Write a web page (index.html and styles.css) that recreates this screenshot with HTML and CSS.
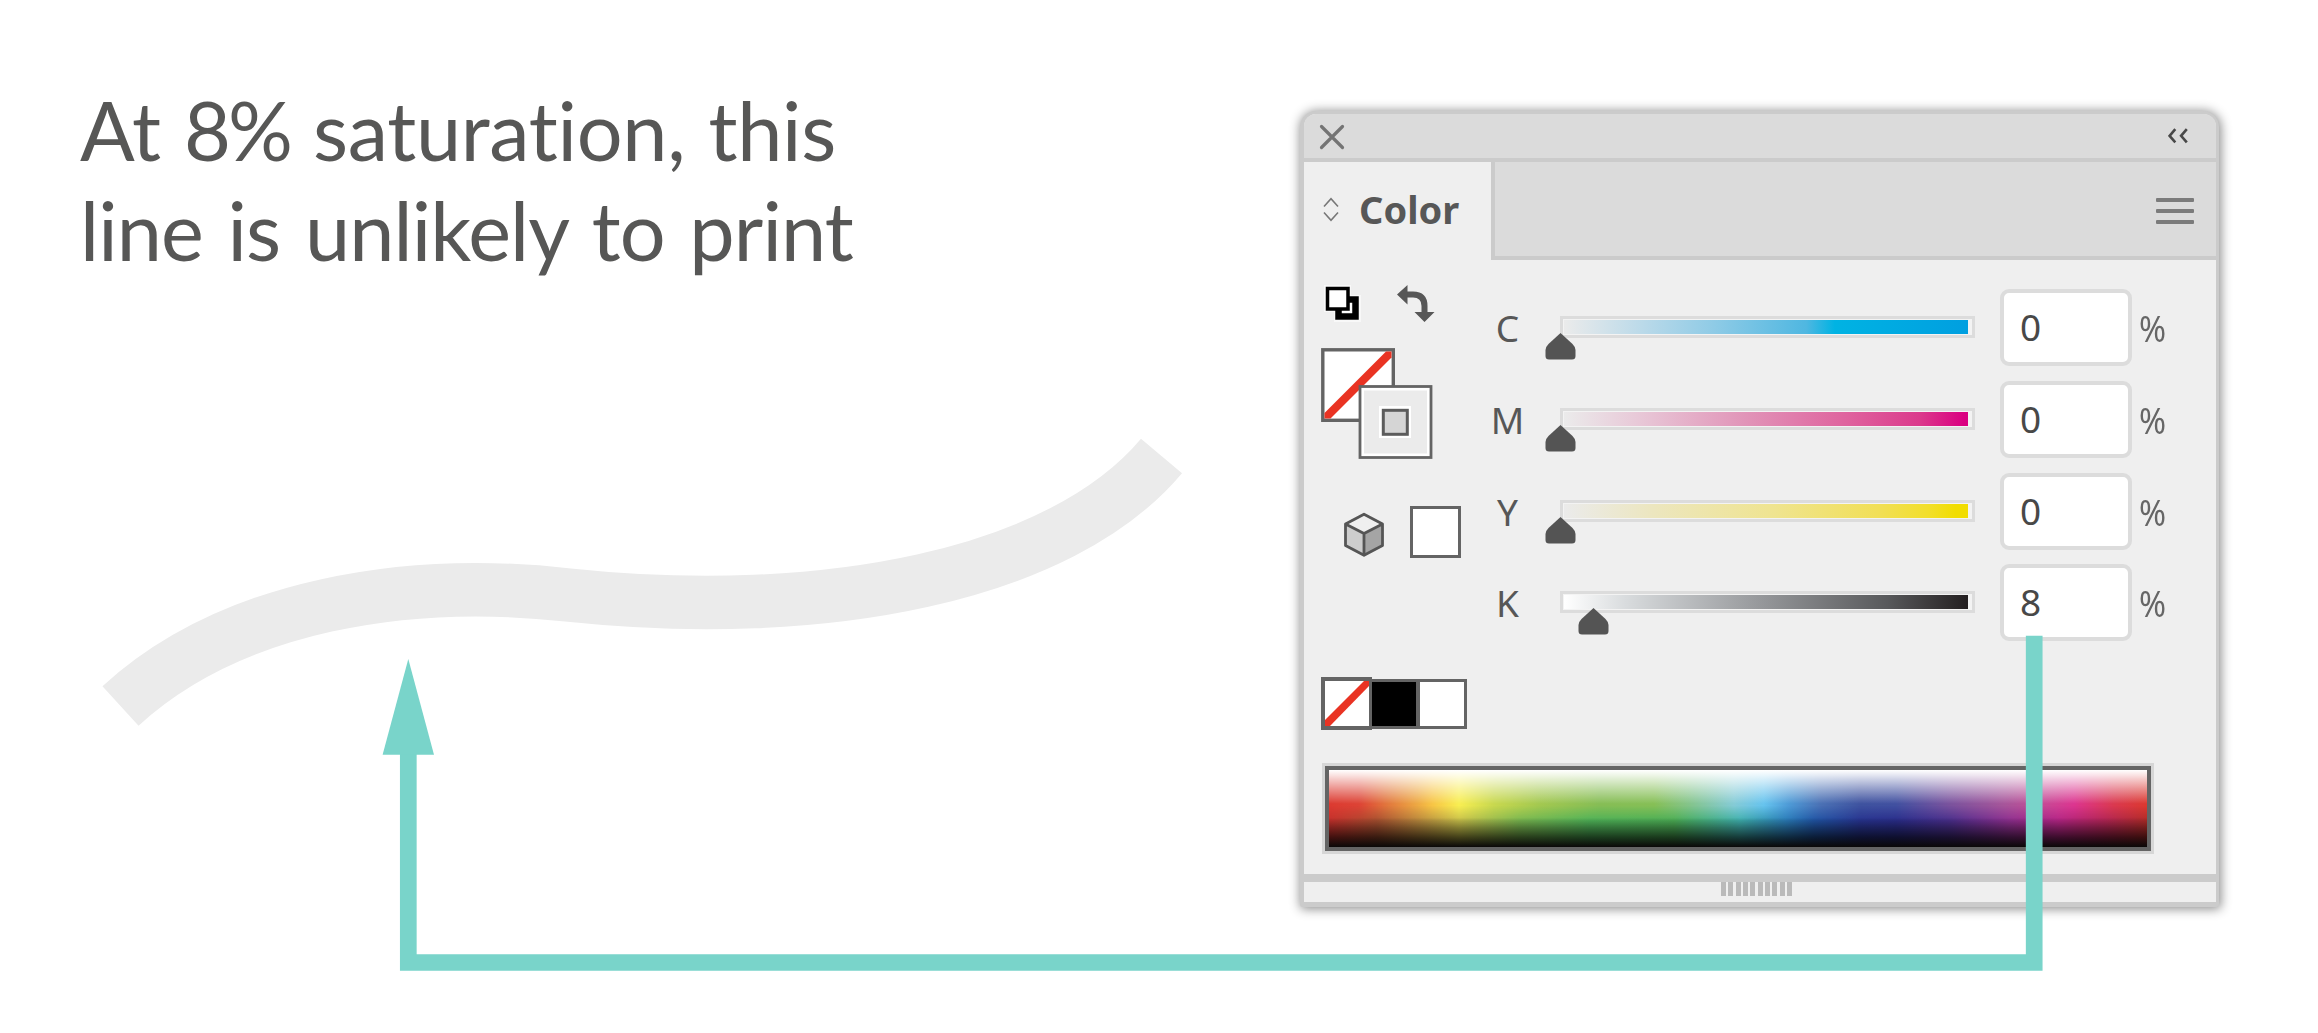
FILE: index.html
```html
<!DOCTYPE html>
<html lang="en">
<head>
    <meta charset="UTF-8">
    <meta name="viewport" content="width=device-width, initial-scale=1.0">
    <title>Color Saturation</title>
    <link rel="stylesheet" href="styles.css">
</head>
<body>
<div class="page">
    <div class="example">
        <h1><span class="line-one">At <span class="percent">8%</span> saturation, this</span><br><span class="line-two">line is unlikely to print</span></h1>
        <svg class="curve" width="1100" height="320" viewBox="90 420 1100 320">
            <path d="M120.5 706C232 604 408 577 568 595C823 622 1061 576 1161.5 456" fill="none" stroke="#ebebeb" stroke-width="53.5"/>
        </svg>
    </div>

    <div class="panel">
        <div class="title-bar">
            <svg width="26" height="26" viewBox="0 0 26 26">
                <path d="M2.5 2.5L23.5 23.5M23.5 2.5L2.5 23.5" stroke="#747474" stroke-width="3.2" stroke-linecap="round"/>
            </svg>
            <svg width="20" height="16" viewBox="0 0 20 16">
                <path d="M7.3 1.2L1.6 7.8L7.3 14.4M18.8 1.2L13.1 7.8L18.8 14.4" fill="none" stroke="#484848" stroke-width="2.6"/>
            </svg>
        </div>

        <div class="tabs">
            <div class="tab">
                <svg width="16" height="26" viewBox="0 0 16 26">
                    <path d="M1 9.5L8 1.8L15 9.5M1 15.5L8 23.2L15 15.5" fill="none" stroke="#777" stroke-width="1.6"/>
                </svg>
                <span>Color</span>
            </div>
            <div class="tab-rest">
                <div class="menu"><i></i><i></i><i></i></div>
            </div>
        </div>

        <div class="panel-body">
            <div class="mixer">
                <div class="tools">
                    <div class="tool-icons">
                        <svg width="40" height="40" viewBox="0 0 40 40">
                            <path d="M1 1H28V11H38V38H11V28H1Z" fill="#f8f8f8"/>
                            <path d="M26 15.5H32.5V32.5H15.5V26" fill="none" stroke="#000" stroke-width="6.5"/>
                            <path d="M19 27.5H27.5V19" fill="none" stroke="#fff" stroke-width="1.5"/>
                            <rect x="4.5" y="4.5" width="20.5" height="20.5" fill="#fff" stroke="#000" stroke-width="3.5"/>
                        </svg>
                        <svg width="40" height="40" viewBox="0 0 40 40">
                            <path d="M9 10.5H17Q28.5 10.5 28.5 22V28" fill="none" stroke="#575757" stroke-width="6"/>
                            <path d="M1 10.5L11.5 1V20.5ZM18.5 28H38.5L28.5 38Z" fill="#575757"/>
                        </svg>
                    </div>
                    <svg class="fill-stroke" width="112" height="112" viewBox="0 0 112 112">
                        <rect x="1.8" y="1.8" width="70.5" height="70.5" fill="#fff" stroke="#646464" stroke-width="3.4"/>
                        <path d="M3.5 65L65 3.5H70.5V9.5L9.5 70.5H3.5Z" fill="#e93323"/>
                        <rect x="39" y="38.5" width="71" height="71" fill="#fff" stroke="#646464" stroke-width="2.8"/>
                        <rect x="43" y="42.5" width="63" height="63" fill="#ebebeb"/>
                        <rect x="58" y="58" width="32" height="32" fill="#fff"/>
                        <rect x="62.3" y="62.3" width="24" height="24" fill="#d5d5d5" stroke="#5c5c5c" stroke-width="3"/>
                    </svg>
                    <div class="gamut">
                        <svg width="42" height="46" viewBox="0 0 42 46">
                            <path d="M21 2L40 12L21 22L2 12Z" fill="#efefef"/>
                            <path d="M2 12L21 22V43L2 33Z" fill="#cdcdcd"/>
                            <path d="M40 12L21 22V43L40 33Z" fill="#a5a5a5"/>
                            <path d="M21 2.2L39.5 12V33.5L21 43.3L2.5 33.5V12ZM2.5 12L21 21.5L39.5 12M21 21.5V43" fill="none" stroke="#555" stroke-width="2.8" stroke-linejoin="round"/>
                        </svg>
                        <div class="gamut-color"></div>
                    </div>
                </div>

                <div class="sliders">
                    <div class="row">
                        <label>C</label>
                        <div class="track">
                            <div class="ramp cyan"></div>
                            <svg class="handle" style="left: 0%" width="31" height="27" viewBox="0 0 31 27"><path d="M15.5 0L27.5 11Q30.5 14 30.5 17V23Q30.5 26.5 27 26.5H4Q.5 26.5 .5 23V17Q.5 14 3.5 11Z"/></svg>
                        </div>
                        <div class="value">0</div>
                        <span class="unit">%</span>
                    </div>
                    <div class="row">
                        <label>M</label>
                        <div class="track">
                            <div class="ramp magenta"></div>
                            <svg class="handle" style="left: 0%" width="31" height="27" viewBox="0 0 31 27"><path d="M15.5 0L27.5 11Q30.5 14 30.5 17V23Q30.5 26.5 27 26.5H4Q.5 26.5 .5 23V17Q.5 14 3.5 11Z"/></svg>
                        </div>
                        <div class="value">0</div>
                        <span class="unit">%</span>
                    </div>
                    <div class="row">
                        <label>Y</label>
                        <div class="track">
                            <div class="ramp yellow"></div>
                            <svg class="handle" style="left: 0%" width="31" height="27" viewBox="0 0 31 27"><path d="M15.5 0L27.5 11Q30.5 14 30.5 17V23Q30.5 26.5 27 26.5H4Q.5 26.5 .5 23V17Q.5 14 3.5 11Z"/></svg>
                        </div>
                        <div class="value">0</div>
                        <span class="unit">%</span>
                    </div>
                    <div class="row">
                        <label>K</label>
                        <div class="track">
                            <div class="ramp black"></div>
                            <svg class="handle" style="left: 8%" width="31" height="27" viewBox="0 0 31 27"><path d="M15.5 0L27.5 11Q30.5 14 30.5 17V23Q30.5 26.5 27 26.5H4Q.5 26.5 .5 23V17Q.5 14 3.5 11Z"/></svg>
                        </div>
                        <div class="value">8</div>
                        <span class="unit">%</span>
                    </div>
                </div>
            </div>

            <div class="swatches">
                <div class="swatch none">
                    <svg width="44" height="45" viewBox="0 0 44 45"><path d="M0 39L39 0H44V5L5 45H0Z" fill="#e93323"/></svg>
                </div>
                <div class="swatch solid"></div>
                <div class="swatch"></div>
            </div>

            <div class="spectrum">
                <div class="hues-dark"></div>
                <div class="hues"></div>
                <div class="shade"></div>
            </div>
        </div>

        <div class="grip-bar">
            <i></i><i></i><i></i><i></i><i></i><i></i><i></i><i></i><i></i><i></i>
        </div>
    </div>

    <!-- arrow from the K value to the line -->
    <svg class="arrow" width="1680" height="330" viewBox="380 650 1680 330">
        <path d="M2034.2 635.7V962.5H408.3V750" fill="none" stroke="#79d4ca" stroke-width="16.7"/>
        <path d="M408.3 659L434 754.7H382.6Z" fill="#79d4ca"/>
    </svg>
</div>
</body>
</html>
```
FILE: styles.css
```css
* {
    box-sizing: border-box;
}

body {
    margin: 0;
    background-color: #fff;
    font-family: "Noto Sans", "Open Sans", sans-serif;
}

svg {
    display: block;
    flex: none;
}

.page {
    position: relative;
    width: 2318px;
    height: 1033px;
    overflow: hidden;
    display: flex;
    align-items: flex-start;
}

.example {
    width: 1300px;
    padding: 80px 0 0 80px;
}

h1 {
    margin: 0;
    font-family: Lato, sans-serif;
    font-weight: normal;
    font-size: 81px;
    line-height: 100px;
    color: #575756;
    white-space: nowrap;
}

.line-one {
    letter-spacing: -0.3px;
    word-spacing: 2.7px;
}

.percent {
    letter-spacing: -3px;
}

.line-two {
    letter-spacing: -0.9px;
    word-spacing: 4.8px;
}

.curve {
    margin: 140px 0 0 10px;
}

.panel {
    width: 919px;
    margin-top: 111px;
    border: solid #cbcbcb;
    border-width: 3px 3px 5px 4px;
    border-radius: 16px 16px 3px 3px;
    background-color: #efefef;
    box-shadow: 1px 1px 11px 1px rgba(0, 0, 0, 0.45);
}

.title-bar {
    height: 48px;
    display: flex;
    justify-content: space-between;
    align-items: flex-start;
    padding: 10px 28px 0 15px;
    border-bottom: 4px solid #cbcbcb;
    border-radius: 12px 12px 0 0;
    background-color: #dbdbdb;
}

.title-bar svg + svg {
    margin-top: 4px;
}

.tabs {
    height: 98px;
    display: flex;
}

.tab {
    width: 187px;
    display: flex;
    align-items: center;
    gap: 20px;
    padding-left: 19px;
    color: #575757;
    font-size: 38px;
    font-weight: bold;
}

.tab svg {
    margin-top: -3px;
}

.tab span {
    margin-top: -4px;
}

.tab-rest {
    flex: 1;
    display: flex;
    justify-content: flex-end;
    padding: 36px 22px 0 0;
    border-left: 4px solid #cbcbcb;
    border-bottom: 4px solid #cbcbcb;
    background-color: #dbdbdb;
}

.menu {
    display: flex;
    flex-direction: column;
    gap: 7px;
}

.menu i {
    width: 38px;
    height: 4px;
    border-radius: 1px;
    background-color: #7b7b7b;
}

.panel-body {
    height: 622px;
    padding: 29px 0 0 17px;
    border-bottom: 8px solid #cbcbcb;
}

.mixer {
    display: flex;
    height: 388px;
}

.tools {
    width: 159px;
}

.tool-icons {
    display: flex;
    gap: 33px;
    margin: -5px 0 0 2px;
}

.fill-stroke {
    margin-top: 24px;
}

.gamut {
    display: flex;
    gap: 25px;
    margin: 46px 0 0 22px;
}

.gamut svg {
    margin-top: 6px;
}

.gamut-color {
    width: 51px;
    height: 52px;
    border: 3px solid #646464;
    background-color: #fff;
}

.sliders {
    display: flex;
    flex-direction: column;
    gap: 14.8px;
}

.row {
    height: 77px;
    display: flex;
    align-items: center;
    color: #575757;
    font-size: 37px;
}

.row label {
    width: 55px;
    text-align: center;
    margin-right: 25px;
}

.track {
    position: relative;
    width: 415px;
    height: 22px;
    margin-top: -1px;
    padding: 1px 4px 1px 1px;
    border: 3px solid #dcdcdc;
    background-color: #f3f3f3;
}

.ramp {
    height: 14px;
}

.cyan {
    background: linear-gradient(to right, #ebebeb, #b9d9e9 20%, #8fcbe6 37%, #4fb7e1 60%, #00b3e3 67%, #009fe0);
}

.magenta {
    background: linear-gradient(to right, #ebebeb, #e8c9d8 18%, #e194b8 45%, #df639e 70%, #db3a8c 88%, #da0081 99%);
}

.yellow {
    background: linear-gradient(to right, #ebebeb, #ece6bf 22%, #efe490 52%, #f1df56 78%, #f2df2b 90%, #f1dd00 97%);
}

.black {
    background: linear-gradient(to right, #fff, #d9dcde 15%, #97999c 48%, #58595b 80%, #231f20);
}

/* handle points at the value on the ramp */
.handle {
    position: absolute;
    top: 14px;
    margin-left: -18px;
    fill: #545454;
}

.value {
    width: 132px;
    height: 77px;
    margin-left: 25px;
    padding-left: 16px;
    border: 4px solid #dcdcdc;
    border-radius: 9px;
    background-color: #fff;
    color: #484848;
    line-height: 68px;
}

.unit {
    margin-left: 7px;
    color: #666;
    transform: scaleX(0.88);
    transform-origin: left;
}

.swatches {
    display: flex;
}

.swatch {
    width: 50px;
    height: 50px;
    margin: 2px 0 0 -2px;
    border: 3px solid #646464;
    background-color: #fff;
}

.swatch.none {
    width: 51px;
    height: 53px;
    margin: 0;
    border-width: 4px 3px 4px 4px;
}

.swatch.solid {
    margin-left: -3px;
    background-color: #000;
}

.spectrum {
    position: relative;
    width: 826px;
    height: 85px;
    margin: 36px 0 0 4px;
    border: 4px solid #646464;
    box-shadow: 0 0 0 3px #d6d6d6;
}

/* stacked layers of the color spectrum */
.hues,
.hues-dark,
.shade {
    position: absolute;
    inset: 0;
}

.hues {
    background: linear-gradient(to right, #dc3a31 0, #dd4335 30px, #e27a3d 60px, #eda843 88px, #f7c445 103px, #f8ee52 130px, #c8d84f 165px, #a3c850 211px, #86bd55 270px, #86bf56 325px, #84c48c 361px, #85cbd6 405px, #66c3ee 435px, #4d9ad6 460px, #4a70b4 492px, #3e529f 532px, #4150a0 567px, #7a529d 621px, #a6559a 675px, #c34c96 710px, #dc3590 745px, #da394f 785px, #db3830 818px);
    -webkit-mask-image: linear-gradient(#000 46%, transparent 66%);
    mask-image: linear-gradient(#000 46%, transparent 66%);
}

.hues-dark {
    background: linear-gradient(to right, #c5302c 0, #a85030 48px, #c8c04a 130px, #7ab850 190px, #4fb358 261px, #4cae55 345px, #3fb0ae 411px, #2a7cb8 457px, #2055a5 485px, #27338f 532px, #2a2d8b 567px, #4a2e8c 621px, #8f2f90 680px, #b52585 730px, #b32556 775px, #b02c28 818px);
}

.shade {
    background: linear-gradient(#fff 0, rgba(255, 255, 255, 0.85) 7%, rgba(255, 255, 255, 0.5) 22%, rgba(255, 255, 255, 0) 44%, rgba(0, 0, 0, 0) 62%, rgba(0, 0, 0, 0.36) 75%, rgba(0, 0, 0, 0.66) 87%, #0a0808 100%);
}

.grip-bar {
    height: 20px;
    display: flex;
    justify-content: center;
    gap: 2.4px;
    padding-right: 7px;
}

.grip-bar i {
    width: 5px;
    height: 14px;
    background-color: #bababa;
}

.arrow {
    position: absolute;
    left: 380px;
    top: 650px;
    overflow: visible;
}
```
